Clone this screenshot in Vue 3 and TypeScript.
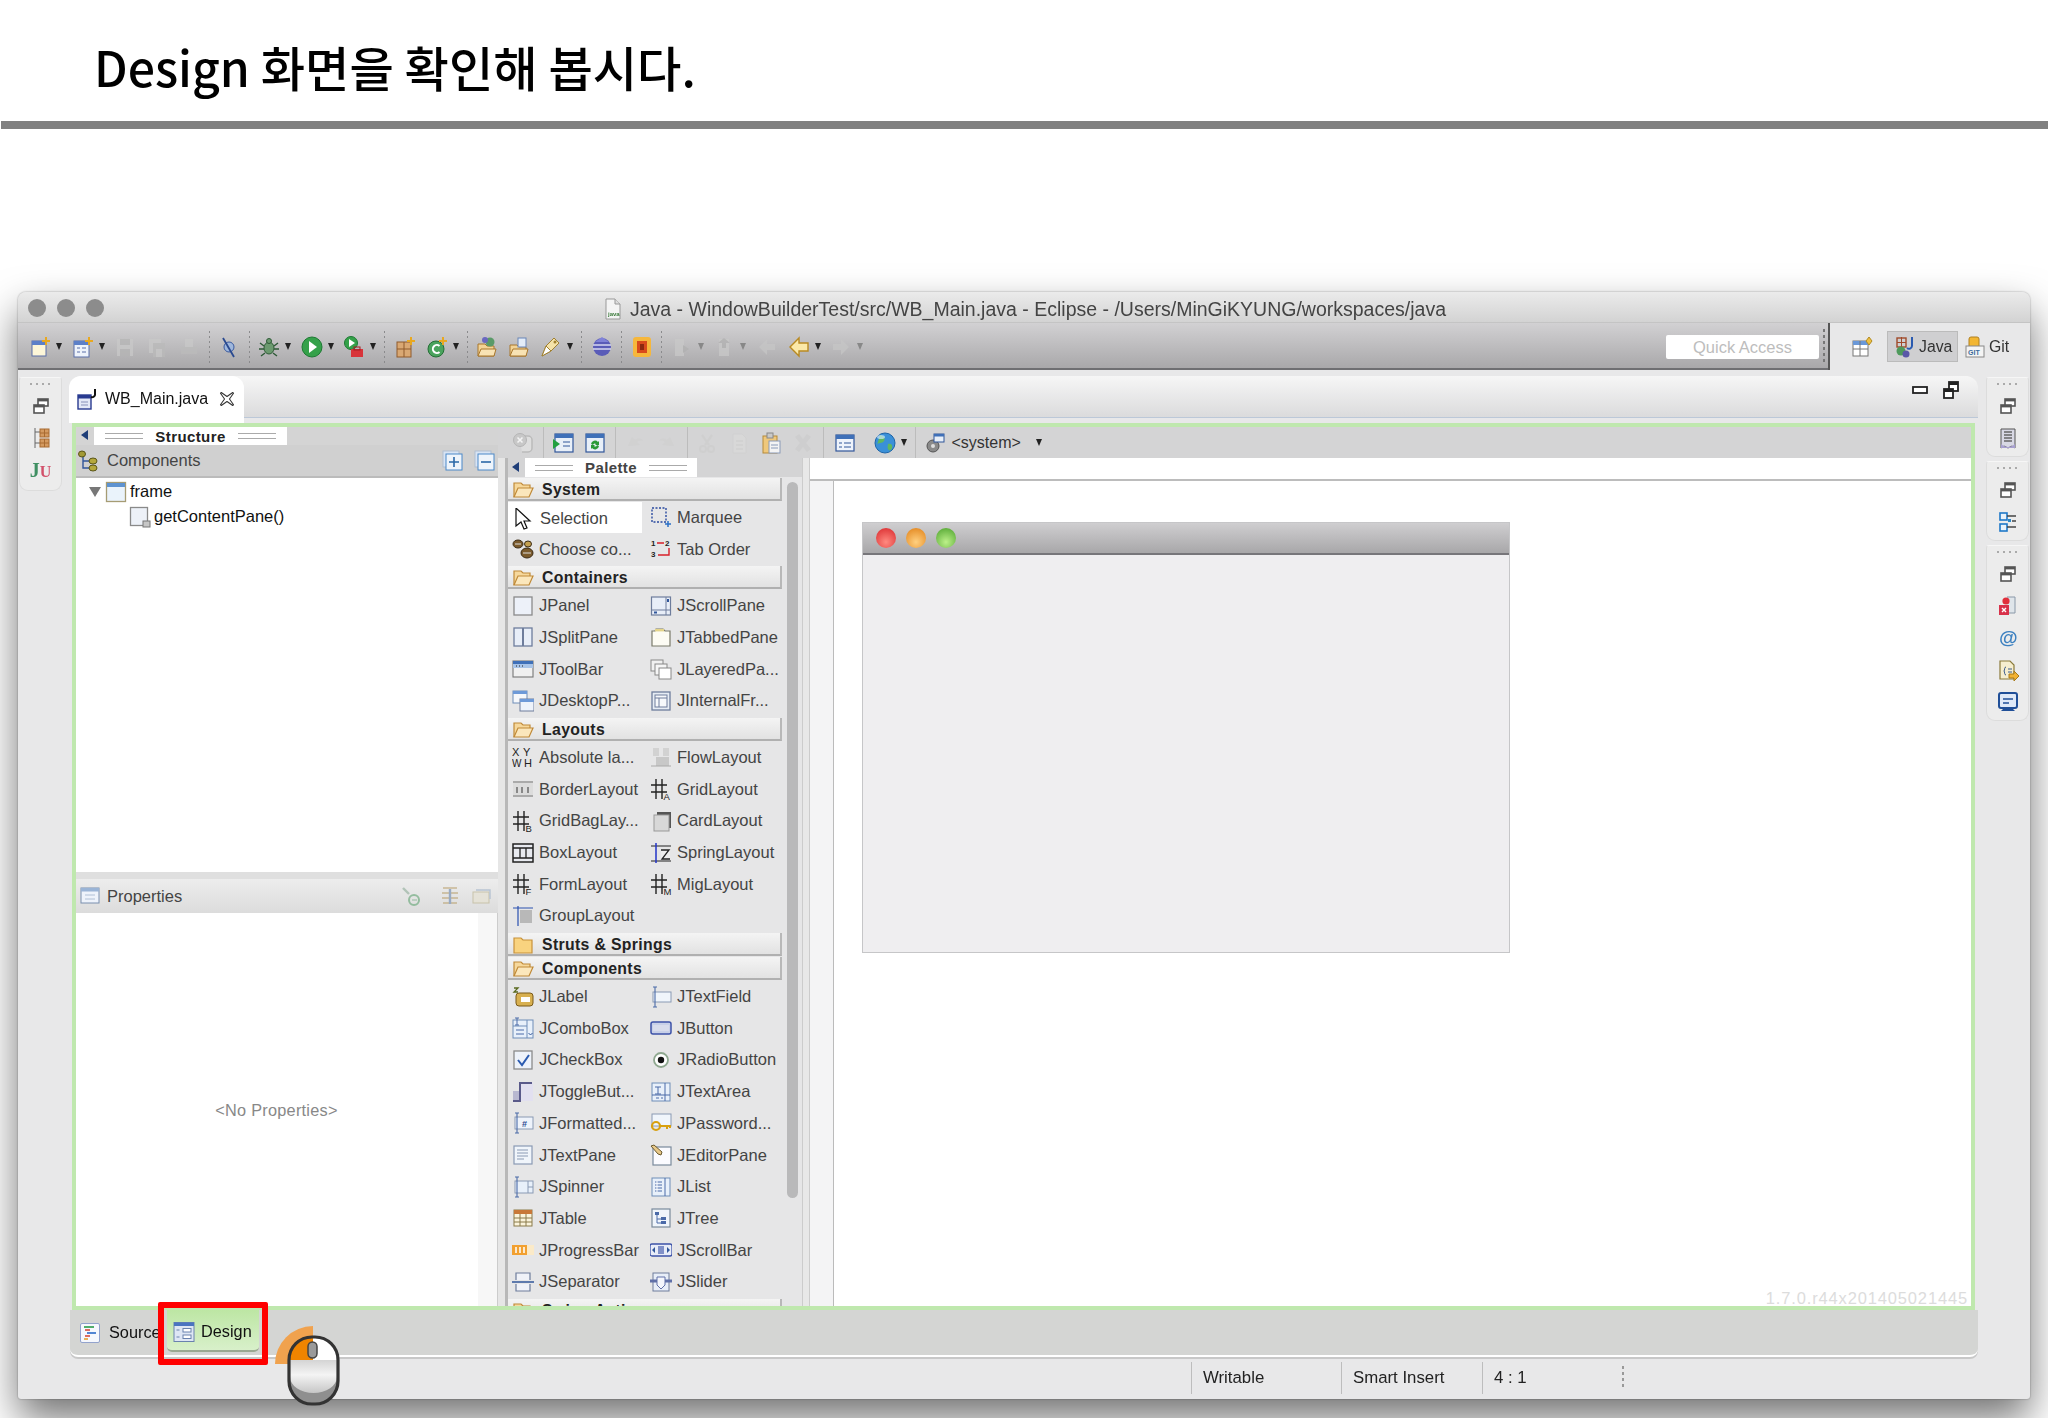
<template>
  <div class="page">
    <header class="slide-head">
      <h1>Design 화면을 확인해 봅시다.</h1>
    </header>
    <div class="slide-rule"></div>

    <div class="window">
      <!-- title bar -->
      <div class="titlebar">
        <div class="lights"><i></i><i></i><i></i></div>
        <div class="title">
          <svg class="ico" viewBox="0 0 22 22" v-html="icons.javaFile"></svg>
          <span>Java - WindowBuilderTest/src/WB_Main.java - Eclipse - /Users/MinGiKYUNG/workspaces/java</span>
        </div>
      </div>

      <!-- main toolbar -->
      <div class="toolrow">
        <div class="tools">
          <template v-for="(t, i) in mainTools" :key="i">
            <span v-if="t.sep" class="sep"></span>
            <span v-else class="tool" :class="{ 'has-arrow': t.arrow, off: t.off }">
              <svg class="ico" viewBox="0 0 22 22" v-html="icons[t.icon!]"></svg>
              <b v-if="t.arrow" class="caret"></b>
            </span>
          </template>
          <div class="quick">Quick Access</div>
          <span class="grip"></span>
        </div>
        <div class="perspectives">
          <svg class="ico" viewBox="0 0 22 22" v-html="icons.openPersp"></svg>
          <div class="persp active">
            <svg class="ico" viewBox="0 0 22 22" v-html="icons.javaPersp"></svg>
            <span>Java</span>
          </div>
          <div class="persp">
            <svg class="ico" viewBox="0 0 22 22" v-html="icons.git"></svg>
            <span>Git</span>
          </div>
        </div>
      </div>

      <div class="workbench">
        <!-- left trim -->
        <aside class="trim trim-left">
          <div class="trim-card">
            <span class="dots"></span>
            <svg class="ico" viewBox="0 0 22 22" v-html="icons.restore"></svg>
            <svg class="ico" viewBox="0 0 22 22" v-html="icons.hierarchy"></svg>
            <span class="junit">J<em>U</em></span>
          </div>
        </aside>

        <!-- editor -->
        <section class="editor">
          <div class="tabbar">
            <div class="file-tab">
              <svg class="ico" viewBox="0 0 22 22" v-html="icons.classFile"></svg>
              <span>WB_Main.java</span>
              <svg class="ico close" viewBox="0 0 22 22" v-html="icons.close"></svg>
            </div>
            <div class="view-btns">
              <svg class="ico" viewBox="0 0 22 22" v-html="icons.minimize"></svg>
              <svg class="ico" viewBox="0 0 22 22" v-html="icons.maximize"></svg>
            </div>
          </div>

          <div class="green-frame">
            <!-- structure -->
            <div class="structure">
              <div class="pane-head">
                <b class="back"></b>
                <div class="head-tab"><u></u><strong>Structure</strong><u></u></div>
              </div>
              <div class="comp-bar">
                <svg class="ico" viewBox="0 0 22 22" v-html="icons.components"></svg>
                <span>Components</span>
                <svg class="ico push" viewBox="0 0 22 22" v-html="icons.expand"></svg>
                <svg class="ico" viewBox="0 0 22 22" v-html="icons.collapse"></svg>
              </div>
              <div class="tree">
                <div class="node">
                  <b class="twist"></b>
                  <svg class="ico" viewBox="0 0 22 22" v-html="icons.frame"></svg>
                  <span>frame</span>
                </div>
                <div class="node child">
                  <svg class="ico" viewBox="0 0 22 22" v-html="icons.pane"></svg>
                  <span>getContentPane()</span>
                </div>
              </div>
              <div class="hsash"></div>
              <div class="prop-bar">
                <svg class="ico" viewBox="0 0 22 22" v-html="icons.propsIcon"></svg>
                <span>Properties</span>
                <svg class="ico push off" viewBox="0 0 22 22" v-html="icons.propA"></svg>
                <svg class="ico off" viewBox="0 0 22 22" v-html="icons.propB"></svg>
                <svg class="ico off" viewBox="0 0 22 22" v-html="icons.propC"></svg>
              </div>
              <div class="props">&lt;No Properties&gt;</div>
            </div>

            <!-- designer -->
            <div class="designer">
              <div class="design-tools">
                <template v-for="(t, i) in designTools" :key="i">
                  <span v-if="t.sep" class="sep plain"></span>
                  <span v-else class="tool" :class="[{ 'has-arrow': t.arrow, off: t.off }, t.cls]">
                    <svg class="ico" viewBox="0 0 22 22" v-html="icons[t.icon!]"></svg>
                    <b v-if="t.arrow" class="caret"></b>
                  </span>
                </template>
                <span class="sep plain"></span>
                <svg class="ico sys" viewBox="0 0 22 22" v-html="icons.system"></svg>
                <span class="laf">&lt;system&gt;</span>
                <b class="caret"></b>
              </div>

              <div class="design-body">
                <div class="palette">
                  <div class="palette-head">
                    <b class="back"></b>
                    <div class="head-tab"><u></u><strong>Palette</strong><u></u></div>
                  </div>
                  <div class="palette-list">
                    <span class="scroll"></span>
                    <template v-for="g in palette" :key="g.name">
                      <div class="cat">
                        <svg class="ico" viewBox="0 0 22 22" v-html="g.closed ? icons.folder : icons.folderOpen"></svg>
                        <span>{{ g.name }}</span>
                      </div>
                      <div v-if="g.items.length" class="items">
                        <div
                          v-for="it in g.items"
                          :key="it[0]"
                          class="item"
                          :class="{ selected: it[0] === 'Selection' }"
                        >
                          <svg class="ico" viewBox="0 0 22 22" v-html="icons[it[1]]"></svg>
                          <span>{{ it[0] }}</span>
                        </div>
                      </div>
                    </template>
                  </div>
                </div>

                <div class="vsash"></div>

                <div class="canvas">
                  <div class="ruler-top"></div>
                  <div class="canvas-row">
                    <div class="ruler-left"></div>
                    <div class="stage">
                      <div class="mock">
                        <div class="mock-title"><i></i><i></i><i></i></div>
                      </div>
                      <span class="version">1.7.0.r44x201405021445</span>
                    </div>
                  </div>
                </div>
              </div>
            </div>
          </div>

          <div class="bottom-tabs">
            <div class="btab">
              <svg class="ico" viewBox="0 0 22 22" v-html="icons.source"></svg>
              <span>Source</span>
            </div>
            <div class="btab active">
              <svg class="ico" viewBox="0 0 22 22" v-html="icons.design"></svg>
              <span>Design</span>
            </div>
          </div>
        </section>

        <!-- right trim -->
        <aside class="trim trim-right">
          <div class="trim-card" v-for="(card, i) in rightTrim" :key="i">
            <span class="dots"></span>
            <svg v-for="n in card" :key="n" class="ico" viewBox="0 0 22 22" v-html="icons[n]"></svg>
          </div>
        </aside>
      </div>

      <!-- status bar -->
      <div class="status">
        <span class="seg w1">Writable</span>
        <span class="seg w2">Smart Insert</span>
        <span class="seg w3">4 : 1</span>
        <span class="status-grip"></span>
      </div>
    </div>

    <!-- callouts on top of the screenshot -->
    <div class="red-box"></div>
    <svg class="mouse" viewBox="0 0 72 84" width="72" height="84">
      <defs>
        <linearGradient id="mouseBody" x1="0" y1="0" x2="0" y2="1">
          <stop offset="0" stop-color="#d4d4d4" />
          <stop offset="0.45" stop-color="#f4f4f4" />
          <stop offset="1" stop-color="#c6c6c6" />
        </linearGradient>
      </defs>
      <path d="M41 41V3A38 38 0 0 0 3 41z" fill="#f0a24e" />
      <rect x="17" y="14" width="49" height="67" rx="23" fill="#8f8f8f" />
      <path d="M41 14h2a23 23 0 0 1 23 23h-25z" fill="#fff" />
      <path d="M41 14h-2a22 22 0 0 0-22 23h24z" fill="#f08400" />
      <path d="M18 37h47v17a23.5 16 0 0 1-47 0z" fill="url(#mouseBody)" />
      <rect x="36" y="19" width="9" height="16" rx="4.5" fill="#9a9a9a" stroke="#444" stroke-width="1.5" />
      <rect x="17" y="14" width="49" height="67" rx="23" fill="none" stroke="#333" stroke-width="3.2" />
    </svg>
  </div>
</template>

<script setup lang="ts">
interface Tool {
  icon?: string
  arrow?: boolean
  off?: boolean
  sep?: boolean
  cls?: string
}

interface PaletteGroup {
  name: string
  closed?: boolean
  items: [string, string][]
}

const grid = (label: string) =>
  `<path d="M1 7h16M1 14h16M6 1v20M12 1v20" stroke="#222" stroke-width="1.4" fill="none"/><text x="13.5" y="21.5" font-size="9.5" font-family="Liberation Sans" fill="#222">${label}</text>`

const icons: Record<string, string> = {
  javaFile:
    '<path d="M4 1h9l5 5v15H4z" fill="#f4f4f4" stroke="#999"/><path d="M13 1v5h5" fill="#ddd" stroke="#999"/><text x="6" y="18" font-size="6" font-family="Liberation Sans" font-weight="700" fill="#3a7a3a">java</text>',
  newWin:
    '<rect x="3" y="5" width="14" height="15" fill="#fdf6d8" stroke="#5a6fa8"/><rect x="3" y="5" width="14" height="4" fill="#5d80c8"/><path d="M17 1v8M13 5h8" stroke="#e8a820" stroke-width="2"/>',
  newClass:
    '<rect x="2" y="5" width="15" height="16" fill="#eef3fb" stroke="#5a6fa8"/><rect x="2" y="5" width="15" height="4" fill="#5d80c8"/><path d="M5 12h3M10 12h4M5 16h3M10 16h4" stroke="#5a6fa8"/><path d="M17 1v8M13 5h8" stroke="#e8a820" stroke-width="2"/>',
  save: '<path d="M3 3h16v17H3z" fill="#c9c9c9"/><path d="M6 3h10v6H6zM6 13h10v7H6z" fill="#b5b5b5"/>',
  saveAll:
    '<path d="M3 3h12v14H3z" fill="#c9c9c9"/><path d="M7 7h12v14H7z" fill="#bababa"/><path d="M10 13h6v8h-6z" fill="#c9c9c9"/>',
  print:
    '<path d="M7 3h8v8H7z" fill="#c9c9c9"/><path d="M3 11h16v7H3z" fill="#bbb"/>',
  skip:
    '<circle cx="11" cy="11" r="5" fill="#9fb7dc" stroke="#3a5aa0"/><path d="M5 2l11 19" stroke="#2a4a90" stroke-width="1.8"/>',
  debug:
    '<ellipse cx="11" cy="12" rx="5" ry="6" fill="#6b9a6f" stroke="#2d5a36"/><circle cx="11" cy="5" r="2.5" fill="#6b9a6f" stroke="#2d5a36"/><path d="M2 7l4 3M20 7l-4 3M1 13h5M21 13h-5M3 20l4-3M19 20l-4-3" stroke="#2d5a36" stroke-width="1.4"/>',
  run: '<circle cx="11" cy="11" r="10" fill="#35a14a" stroke="#1d7a33"/><path d="M8 5l8 6-8 6z" fill="#fff"/>',
  extTools:
    '<circle cx="8" cy="7" r="6.5" fill="#35a14a" stroke="#1d7a33"/><path d="M6 3l6 4-6 4z" fill="#fff"/><rect x="8" y="13" width="12" height="8" fill="#d8343a"/><rect x="11" y="11" width="6" height="3" fill="none" stroke="#a51c22"/>',
  newPkg:
    '<rect x="3" y="6" width="14" height="15" fill="#d9a873" stroke="#8f5b2c"/><path d="M10 6v15M3 13h14" stroke="#8f5b2c"/><path d="M17 1v8M13 5h8" stroke="#e8a820" stroke-width="2"/>',
  newType:
    '<circle cx="10" cy="13" r="8" fill="#4aa35d" stroke="#246f36"/><path d="M13.5 10a4 4 0 1 0 0 6" fill="none" stroke="#fff" stroke-width="2"/><path d="M17 1v8M13 5h8" stroke="#e8a820" stroke-width="2"/>',
  openType:
    '<path d="M2 20V8h7l2 2h7v10z" fill="#f2d395" stroke="#a8762c"/><path d="M2 20l3-7h15l-2 7z" fill="#f8e3b4" stroke="#a8762c"/><circle cx="14" cy="6" r="4.5" fill="#5a9a68"/><circle cx="9" cy="4" r="3" fill="#6a68c0"/>',
  openRes:
    '<path d="M2 20V9h7l2 2h7v9z" fill="#f2d395" stroke="#a8762c"/><path d="M2 20l3-7h15l-2 7z" fill="#f8e3b4" stroke="#a8762c"/><rect x="10" y="2" width="8" height="9" fill="#e3ecf8" stroke="#6a86b8"/>',
  search:
    '<path d="M2 20l4-10 8-8 5 5-8 8z" fill="#f5e2a8" stroke="#a08030"/><path d="M2 20l4-10 5 5z" fill="#fff" stroke="#a08030"/><circle cx="15" cy="6" r="1.5" fill="#a08030"/>',
  ball: '<circle cx="11" cy="11" r="9" fill="#5a5cb8"/><path d="M2 9h18M2 13h18" stroke="#d8d8f0" stroke-width="1.4"/><path d="M4 6l7-5 7 5" fill="#8082d8"/>',
  stop: '<rect x="2" y="1" width="18" height="20" rx="3" fill="#f6b73c"/><rect x="6" y="5" width="10" height="12" fill="#d84a1c"/><rect x="9" y="8" width="4" height="6" fill="#8c2a10"/>',
  nextAnn:
    '<path d="M4 3h9v17H4z" fill="#c8c8c8"/><path d="M12 9l6 4-6 4z" fill="#b0b0b0"/>',
  prevAnn:
    '<path d="M6 3h10v17H6z" fill="#c8c8c8"/><path d="M11 2l6 5h-4v5h-4V7H5z" fill="#b0b0b0"/>',
  backOff: '<path d="M3 11l8-8v5h8v6h-8v5z" fill="#c6c6c6"/>',
  back: '<path d="M2 11l9-9v5h9v8h-9v5z" fill="#fbe9a8" stroke="#b98a22" stroke-width="1.4"/>',
  fwdOff: '<path d="M19 11l-8-8v5H3v6h8v5z" fill="#c6c6c6"/>',
  openPersp:
    '<rect x="2" y="5" width="15" height="15" fill="#fff" stroke="#777"/><rect x="2" y="5" width="15" height="4" fill="#6a98d8"/><path d="M9 5v15M2 13h15" stroke="#777"/><path d="M18 1l3 4-3 4-3-4z" fill="#f0c040" stroke="#b08a20"/>',
  javaPersp:
    '<rect x="3" y="2" width="9" height="9" fill="none" stroke="#a04a2a" stroke-width="1.4"/><path d="M7.5 1v11M3 6.5h9" stroke="#a04a2a"/><circle cx="7" cy="15" r="4.5" fill="#4e9a5c"/><circle cx="12" cy="18" r="3.5" fill="#5a58a8"/><path d="M18 1v9a3 3 0 0 1-5 2" fill="none" stroke="#2a5ab0" stroke-width="2"/>',
  git: '<rect x="5" y="1" width="10" height="11" rx="2" fill="#f2b632" stroke="#b08020"/><rect x="2" y="10" width="18" height="11" fill="#f4f4f4" stroke="#888"/><text x="4" y="19" font-size="7" font-weight="700" font-family="Liberation Sans" fill="#3a6a9a">GIT</text>',
  restore:
    '<rect x="8" y="4" width="10" height="7" fill="#fff" stroke="#555" stroke-width="1.6"/><rect x="8" y="4" width="10" height="2.4" fill="#555"/><rect x="4" y="10" width="10" height="8" fill="#fff" stroke="#555" stroke-width="1.6"/><rect x="4" y="10" width="10" height="2.4" fill="#555"/>',
  hierarchy:
    '<path d="M5 1v20M5 5h5M5 16h5" stroke="#666" fill="none"/><rect x="10" y="2" width="9" height="8" fill="#d49a60" stroke="#a86a30"/><rect x="10" y="12" width="9" height="8" fill="#d49a60" stroke="#a86a30"/><path d="M14.5 2v8M10 6h9M14.5 12v8M10 16h9" stroke="#a86a30"/>',
  classFile:
    '<rect x="1" y="7" width="13" height="14" fill="#e4e8f6" stroke="#283a90" stroke-width="1.4"/><rect x="1" y="7" width="13" height="3.5" fill="#283a90"/><path d="M4 14h7M4 17h7" stroke="#8890b8"/><path d="M18 1v6a3 3 0 0 1-4 2" fill="none" stroke="#111" stroke-width="2"/>',
  close:
    '<path d="M4 3l7 5 7-5 1 1-5 7 5 7-1 1-7-5-7 5-1-1 5-7-5-7z" fill="#fff" stroke="#333" stroke-width="1.3" stroke-linejoin="round"/>',
  minimize: '<rect x="3" y="8" width="14" height="6" fill="#fff" stroke="#222" stroke-width="1.8"/>',
  maximize:
    '<rect x="9" y="3" width="9" height="9" fill="#fff" stroke="#222" stroke-width="1.8"/><rect x="9" y="3" width="9" height="3" fill="#222"/><rect x="4" y="10" width="9" height="9" fill="#fff" stroke="#222" stroke-width="1.8"/><rect x="4" y="10" width="9" height="3" fill="#222"/>',
  components:
    '<path d="M5 5v13h7M5 11h7" fill="none" stroke="#31569a" stroke-width="1.4"/><ellipse cx="4" cy="4" rx="3.5" ry="3" fill="#a39a36" stroke="#5a5618"/><ellipse cx="15" cy="11" rx="4" ry="3" fill="#b5a83c" stroke="#5a5618"/><ellipse cx="15" cy="18" rx="4" ry="3" fill="#b5a83c" stroke="#5a5618"/>',
  expand:
    '<rect x="1" y="1" width="16" height="16" fill="#d8e4f4" stroke="#b0bed0"/><rect x="4" y="4" width="16" height="16" fill="#eef4fb" stroke="#4a88c8"/><path d="M12 7v10M7 12h10" stroke="#2a68a8" stroke-width="1.6"/>',
  collapse:
    '<rect x="1" y="1" width="16" height="16" fill="#d8e4f4" stroke="#b0bed0"/><rect x="4" y="4" width="16" height="16" fill="#eef4fb" stroke="#4a88c8"/><path d="M7 12h10" stroke="#2a68a8" stroke-width="1.6"/>',
  frame:
    '<rect x="1.5" y="1.5" width="19" height="19" fill="#eaf3fb" stroke="#a69c74" stroke-width="1.3"/><rect x="2" y="2" width="18" height="4" fill="#5f93d0"/>',
  pane: '<rect x="1.5" y="1.5" width="17" height="18" fill="#edf1f8" stroke="#8a8a8a" stroke-width="1.3"/><rect x="14" y="15" width="7" height="6" fill="#c6c6c6" stroke="#777"/>',
  propsIcon:
    '<rect x="2" y="3" width="18" height="15" fill="#eef3fb" stroke="#7a8fae"/><rect x="2" y="3" width="18" height="3.5" fill="#9ab4d6"/><path d="M6 10h10M6 14h10" stroke="#b0c0d6"/>',
  propA:
    '<circle cx="14" cy="15" r="5" fill="none" stroke="#7ab088" stroke-width="2"/><path d="M3 3l6 6" stroke="#a0b8a8" stroke-width="2.4"/><path d="M12 15h5" stroke="#7ab088"/>',
  propB:
    '<path d="M4 3h14M3 8h16M3 13h16M4 18h14" stroke="#bda678" stroke-width="1.6"/><path d="M11 4v15" stroke="#8098b8" stroke-width="2.4"/>',
  propC:
    '<rect x="3" y="7" width="16" height="11" fill="#e6e2d4" stroke="#c0b898"/><path d="M6 5h14v9" fill="none" stroke="#a8b8cc" stroke-width="1.4"/>',
  refreshX:
    '<path d="M7 4h9a4 4 0 0 1 4 4v8a4 4 0 0 1-4 4h-6" fill="#e2e2e2" stroke="#b2b2b2" stroke-width="1.5"/><circle cx="8" cy="8" r="6.5" fill="#c4c4c4" stroke="#aaa"/><path d="M5.5 5.5l5 5M10.5 5.5l-5 5" stroke="#fff" stroke-width="1.6"/>',
  testForm:
    '<rect x="3" y="2" width="18" height="18" fill="#e8eff8" stroke="#31569a" stroke-width="1.2"/><rect x="3" y="2" width="18" height="4" fill="#3f70b8"/><path d="M11 10h7M11 14h7" stroke="#31569a"/><path d="M1 7l7 5-7 5z" fill="#22a040"/>',
  refreshForm:
    '<rect x="2" y="2" width="18" height="18" fill="#e8eff8" stroke="#31569a" stroke-width="1.2"/><rect x="2" y="2" width="18" height="4" fill="#3f70b8"/><path d="M7 12a4 4 0 0 1 7-2l1-1v4h-4l1-1a2 2 0 0 0-3 1zM15 14a4 4 0 0 1-7 2l-1 1v-4h4l-1 1a2 2 0 0 0 3-1z" fill="#2a9a38"/>',
  undo: '<path d="M4 14l4-9 3 3c3-2 6-2 8 1-3-1-5 0-6 1l3 3z" fill="#d0d0d0"/>',
  redo: '<path d="M18 14l-4-9-3 3c-3-2-6-2-8 1 3-1 5 0 6 1l-3 3z" fill="#d0d0d0"/>',
  cut: '<path d="M6 3l7 10M16 3l-7 10" stroke="#cecece" stroke-width="2.2"/><circle cx="7" cy="17" r="3" fill="none" stroke="#cecece" stroke-width="2"/><circle cx="15" cy="17" r="3" fill="none" stroke="#cecece" stroke-width="2"/>',
  copy: '<path d="M5 2h9l4 4v15H5z" fill="#dadada" stroke="#d0d0d0"/><path d="M8 9h7M8 13h7M8 17h7" stroke="#cacaca"/>',
  paste:
    '<rect x="3" y="4" width="14" height="17" fill="#efc87c" stroke="#b58a3a"/><rect x="7" y="1" width="6" height="5" fill="#c9c9c9" stroke="#888"/><rect x="9" y="9" width="11" height="12" fill="#f4f4f4" stroke="#8a9ab8"/><path d="M11 13h7M11 16h7" stroke="#8a9ab8"/>',
  del: '<path d="M3 5l4-3 4 5 4-5 4 3-5 6 5 6-4 3-4-5-4 5-4-3 5-6z" fill="#cdcdcd"/>',
  preview:
    '<rect x="2" y="3" width="18" height="16" fill="#eef3fb" stroke="#31569a" stroke-width="1.2"/><rect x="2" y="3" width="18" height="4" fill="#3f70b8"/><path d="M5 11h3M10 11h7M5 15h3M10 15h7" stroke="#31569a"/>',
  globe:
    '<circle cx="11" cy="11" r="10" fill="#3a90d8" stroke="#1d64a8"/><path d="M6 3c3 1 6 3 4 6s-6 1-7 4M14 12c3-1 5 1 4 4s-3 3-4 1 0-3 0-5z" fill="#5fb860"/><ellipse cx="7" cy="5" rx="4" ry="2" fill="#cfe8fa" opacity=".7"/>',
  system:
    '<circle cx="9" cy="14" r="6" fill="#8a8a8a" stroke="#555"/><circle cx="9" cy="14" r="2" fill="#ddd"/><rect x="10" y="2" width="10" height="8" fill="#e8eff8" stroke="#31569a"/><rect x="10" y="2" width="10" height="2.5" fill="#3f70b8"/>',
  tasks:
    '<path d="M4 2h14v19l-3-2-4 2-4-2-3 2z" fill="#d8d8e4" stroke="#555"/><path d="M7 5h8M7 8h8M7 11h8M7 14h8" stroke="#666" stroke-width="1.3"/><path d="M4 17c4 4 10 4 14 0v4H4z" fill="#a8a0d0"/>',
  outline:
    '<rect x="3" y="2" width="7" height="7" fill="#e8f2fb" stroke="#1f78c8" stroke-width="1.6"/><rect x="3" y="13" width="7" height="7" fill="#e8f2fb" stroke="#1f78c8" stroke-width="1.6"/><rect x="11" y="8" width="3" height="3" fill="#2a88c8"/><path d="M10 5h9M15 10h4M10 16h9" stroke="#444" stroke-width="1.3"/>',
  problems:
    '<path d="M10 2h8v16H9" fill="#dfe5ea" stroke="#8a98a8"/><circle cx="9" cy="6" r="3.6" fill="#e0303c"/><rect x="2" y="10" width="10" height="10" fill="#d8324a"/><path d="M5 13l4 4M9 13l-4 4" stroke="#fff" stroke-width="1.4"/>',
  at: '<text x="11" y="17" font-size="19" text-anchor="middle" font-style="italic" font-family="Liberation Sans" font-weight="700" fill="#3c80c0">@</text>',
  decl: '<path d="M3 2h10l4 4v14H3z" fill="#f6eecf" stroke="#8a7a3a" stroke-width="1.2"/><path d="M9 8c-2 0-1 3-2 4 1 1 0 4 2 4M11 10h4M11 13h4" stroke="#3a5a8a" fill="none"/><path d="M12 15h5v-3l5 5-5 5v-3h-5z" fill="#f2b233" stroke="#a87a18"/>',
  console:
    '<rect x="2" y="2" width="18" height="15" rx="2" fill="#dfe9f8" stroke="#204f98" stroke-width="2"/><path d="M6 8h10M6 12h6" stroke="#204f98" stroke-width="1.5"/><path d="M4 20h14l-3-3H7z" fill="#204f98"/>',
  folder:
    '<path d="M2 19V4h7l2 2h9v13z" fill="#f9d37f" stroke="#c8923a" stroke-width="1.2"/>',
  folderOpen:
    '<path d="M2 18V4h7l2 2h7v3" fill="#f6d89c" stroke="#c08a38" stroke-width="1.2"/><path d="M2 18l4-9h15l-4 9z" fill="#fbe7bc" stroke="#c08a38" stroke-width="1.2"/>',
  cursor:
    '<path d="M4 0v18l5-4 3 7 3-1-3-7h6z" fill="#fff" stroke="#111" stroke-width="1.2"/>',
  marquee:
    '<rect x="2" y="2" width="14" height="14" fill="none" stroke="#2a4aa0" stroke-width="1.4" stroke-dasharray="2 1.5"/><path d="M18 15v6M15 18h6" stroke="#2a70c8" stroke-width="1.5"/>',
  beans:
    '<ellipse cx="6" cy="6" rx="5" ry="4" fill="#7a5a2c" stroke="#3a2a14"/><ellipse cx="16" cy="6" rx="3.5" ry="3" fill="#c4a050" stroke="#3a2a14"/><ellipse cx="15" cy="15" rx="6" ry="5" fill="#7a5a2c" stroke="#3a2a14"/><path d="M3 6h6M11 15h8" stroke="#ddd"/>',
  tabOrder:
    '<text x="1" y="8" font-size="8" font-weight="700" font-family="Liberation Sans" fill="#222">1</text><text x="15" y="8" font-size="8" font-weight="700" font-family="Liberation Sans" fill="#222">2</text><text x="1" y="19" font-size="8" font-weight="700" font-family="Liberation Sans" fill="#222">3</text><path d="M7 5h7M19 10v7h-11" fill="none" stroke="#d8202a" stroke-width="1.4"/>',
  jpanel: '<rect x="2" y="2" width="18" height="18" fill="#edf1f9" stroke="#8a8a8a" stroke-width="1.3"/>',
  jscroll:
    '<rect x="1.5" y="2" width="19" height="18" fill="#e8eef8" stroke="#6e7d9c" stroke-width="1.2"/><path d="M16 2v18M1.5 15h19" stroke="#6e7d9c"/><rect x="17" y="4" width="2" height="3" fill="#31569a"/><rect x="4" y="16.5" width="3" height="2" fill="#31569a"/>',
  jsplit:
    '<rect x="2" y="2" width="18" height="18" fill="#e8eef8" stroke="#6e7d9c" stroke-width="1.3"/><path d="M11 2v18" stroke="#6e7d9c" stroke-width="2"/>',
  jtabbed:
    '<path d="M2 5h3l1-2h7l2 2h5v15H2z" fill="#fdfcf4" stroke="#7a7a6a" stroke-width="1.2"/><rect x="5" y="3" width="9" height="2.4" fill="#e4d48a"/>',
  jtoolbar:
    '<rect x="1" y="3" width="20" height="16" fill="#f0f0f0" stroke="#777" stroke-width="1.1"/><rect x="1" y="3" width="20" height="3" fill="#3f70b8"/><rect x="1" y="6" width="20" height="4" fill="#a8c4e8"/><path d="M4 8h1M7 8h1M10 8h1" stroke="#222"/>',
  jlayered:
    '<rect x="1" y="2" width="12" height="11" fill="#f0f0f0" stroke="#888"/><rect x="5" y="6" width="12" height="11" fill="#f6f6f6" stroke="#888"/><rect x="9" y="10" width="12" height="11" fill="#fff" stroke="#888"/>',
  jdesktop:
    '<rect x="1" y="1" width="14" height="12" fill="#f6f8fb" stroke="#6e8db8"/><rect x="1" y="1" width="14" height="3" fill="#6e9ad8"/><rect x="8" y="9" width="14" height="12" fill="#eef3fb" stroke="#6e7d9c"/><rect x="8" y="9" width="14" height="3" fill="#6e9ad8"/>',
  jinternal:
    '<rect x="2" y="2" width="18" height="18" fill="#e6ecf4" stroke="#6e7d9c" stroke-width="1.3"/><rect x="5" y="5" width="12" height="12" fill="#f6f8fb" stroke="#6e7d9c"/><path d="M5 8h12M9 8v9" stroke="#6e7d9c"/>',
  absolute:
    '<text x="0" y="10" font-size="11" font-family="Liberation Sans" fill="#222">X</text><text x="11" y="10" font-size="11" font-family="Liberation Sans" fill="#222">Y</text><text x="0" y="21" font-size="10" font-family="Liberation Sans" fill="#222">W</text><text x="12" y="21" font-size="11" font-family="Liberation Sans" fill="#222">H</text>',
  flow: '<rect x="3" y="2" width="6" height="8" fill="#d2d2d2"/><rect x="13" y="2" width="6" height="8" fill="#d2d2d2"/><rect x="6" y="11" width="13" height="9" fill="#c8c8c8"/><path d="M1 20h20" stroke="#aaa"/>',
  border:
    '<rect x="1" y="3" width="20" height="16" fill="#dcdcdc"/><path d="M1 4h20M1 18h20" stroke="#999" stroke-width="1.4"/><path d="M5 9v6M10 9v6M16 9v6" stroke="#888" stroke-width="2"/>',
  gridA: grid('A'),
  gridB: grid('B'),
  card: '<rect x="7" y="2" width="14" height="16" fill="#555"/><rect x="4" y="5" width="15" height="16" fill="#d8d8d8" stroke="#999"/>',
  box: '<rect x="1" y="2" width="20" height="18" fill="#e8eaf0" stroke="#222" stroke-width="1.5"/><path d="M1 6h20M1 16h20M8 6v10M14 6v10" stroke="#222" stroke-width="1.3"/>',
  spring:
    '<path d="M1 4h20M1 19h20" stroke="#222"/><path d="M6 1v20" stroke="#2233c8" stroke-width="1.5"/><rect x="11" y="7" width="9" height="11" fill="#eee"/><path d="M11 8h8l-7 9h8" fill="none" stroke="#222" stroke-width="1.3"/>',
  gridF: grid('F'),
  gridM: grid('M'),
  group:
    '<path d="M1 3h20M6 1v20" stroke="#2a50b0" stroke-width="1.2"/><rect x="8" y="5" width="12" height="13" fill="#b8b8b8"/>',
  jlabel:
    '<rect x="4" y="7" width="17" height="13" rx="3" fill="#d8b050" stroke="#7a5a18"/><rect x="9" y="11" width="9" height="5" fill="#fff"/><path d="M2 2h4l-4 4h4" fill="none" stroke="#5a6a20" stroke-width="1.3"/>',
  jtextfield:
    '<rect x="3" y="6" width="18" height="10" fill="#f0f5fb" stroke="#8a9ab4"/><path d="M3 1h4M5 1v20M3 21h4" stroke="#4a6aa8" stroke-width="1.1"/>',
  jcombo:
    '<rect x="1" y="3" width="20" height="18" fill="#e8f0fa" stroke="#6e8db8"/><path d="M15 3v18M1 9h14" stroke="#6e8db8"/><path d="M5 1v7M3 1h4M3 8h4M4 13h8M4 17h8" stroke="#4a6aa8"/><path d="M16.5 16l2 2 2-2" stroke="#31569a" fill="none"/>',
  jbutton:
    '<rect x="1" y="5" width="20" height="12" rx="2" fill="#c8d0e8" stroke="#3c52a8" stroke-width="1.5"/><rect x="3" y="8" width="16" height="6" fill="#d8dcec"/>',
  jcheck:
    '<rect x="2" y="2" width="18" height="18" fill="#edf2fa" stroke="#8a8a8a" stroke-width="1.3"/><path d="M6 11l4 5 7-10" fill="none" stroke="#2a5ab0" stroke-width="2"/>',
  jradio:
    '<circle cx="11" cy="11" r="7" fill="#fff" stroke="#8fa890" stroke-width="1.8"/><circle cx="11" cy="11" r="3.2" fill="#111"/>',
  jtoggle:
    '<rect x="9" y="2" width="12" height="18" fill="#e2e0f0"/><rect x="1" y="10" width="8" height="10" fill="#b8b8d0"/><path d="M1 20h7V2h12" fill="none" stroke="#5a5a8a" stroke-width="2"/>',
  jtextarea:
    '<rect x="2" y="2" width="18" height="18" fill="#e8f0fa" stroke="#6e8db8"/><path d="M15 2v18M2 14h18M5 6h6M8 6v7M5 13h6" stroke="#4a6aa8"/><path d="M6 17h3M11 17h2" stroke="#4a6aa8"/>',
  jformatted:
    '<rect x="3" y="5" width="18" height="12" fill="#eef3fb" stroke="#8a9ab4"/><path d="M3 1h4M5 1v20M3 21h4" stroke="#4a6aa8" stroke-width="1.1"/><text x="10" y="15" font-size="9" font-weight="700" font-family="Liberation Sans" fill="#2a4a90">#</text>',
  jpassword:
    '<rect x="2" y="2" width="19" height="12" fill="#f0f5fb" stroke="#8a9ab4"/><circle cx="6" cy="14" r="4" fill="none" stroke="#d8a010" stroke-width="2.2"/><path d="M10 14h11M17 14v3M20 14v2" stroke="#d8a010" stroke-width="2"/>',
  jtextpane:
    '<rect x="2" y="2" width="18" height="18" fill="#f0f5fb" stroke="#8a9ab4" stroke-width="1.2"/><path d="M5 6h11M5 9h11M5 12h11M5 15h7" stroke="#8a9ab4"/>',
  jeditor:
    '<rect x="3" y="3" width="18" height="18" fill="#fbfbff" stroke="#7a8a9c" stroke-width="1.2"/><path d="M1 2l3-1 8 7-1 3-3-1z" fill="#e8c888" stroke="#6a5a30"/>',
  jspinner:
    '<rect x="3" y="5" width="18" height="12" fill="#e8f0fa" stroke="#8a9ab4"/><path d="M16 5v12M16 11h5" stroke="#8a9ab4"/><path d="M3 1h4M5 1v20M3 21h4" stroke="#4a6aa8" stroke-width="1.1"/>',
  jlist:
    '<rect x="2" y="2" width="18" height="18" fill="#e8f0fa" stroke="#6e8db8"/><path d="M15 2v18M5 6h7M5 9h7M5 12h7M5 15h7" stroke="#4a6aa8"/><path d="M7 5v11" stroke="#fff"/>',
  jtable:
    '<rect x="2" y="3" width="18" height="16" fill="#fbf4dc" stroke="#8a7a4a"/><rect x="2" y="3" width="18" height="4" fill="#c87838"/><path d="M2 11h18M2 15h18M8 7v12M14 7v12" stroke="#8a7a4a"/>',
  jtree:
    '<rect x="2" y="2" width="18" height="18" fill="#f0f5fb" stroke="#7a8a9c" stroke-width="1.2"/><rect x="5" y="5" width="4" height="3" fill="#4a6aa8"/><rect x="11" y="10" width="5" height="3" fill="#4a6aa8"/><rect x="11" y="14" width="5" height="3" fill="#4a6aa8"/><path d="M7 8v8h4M7 12h4" stroke="#4a6aa8" fill="none"/>',
  jprogress:
    '<rect x="0" y="6" width="22" height="10" fill="#fbeac8"/><rect x="0" y="6" width="15" height="10" fill="#f2a030"/><path d="M4 8v6M8 8v6M12 8v6" stroke="#fff" stroke-width="1.5"/>',
  jscrollbar:
    '<rect x="0" y="5" width="22" height="12" rx="2" fill="#e8ecf8" stroke="#3c52a8" stroke-width="1.3"/><path d="M5 8l-3 3 3 3zM17 8l3 3-3 3z" fill="#31569a"/><rect x="8" y="7" width="6" height="8" fill="#8090c8"/>',
  jseparator:
    '<path d="M4 9V2h14v7M4 13v7h14v-7" fill="#f0f2f8" stroke="#6e7d9c" stroke-width="1.2"/><path d="M0 11h22" stroke="#31569a" stroke-width="1.5"/>',
  jslider:
    '<rect x="3" y="2" width="16" height="18" fill="#e8eef8" stroke="#6e7d9c"/><path d="M0 10h22" stroke="#6070a8" stroke-width="3"/><path d="M7 6h8v8l-4 4-4-4z" fill="#f4f6fc" stroke="#6070a8"/>',
  source:
    '<rect x="1.5" y="1.5" width="19" height="19" rx="1.5" fill="#f6f8fd" stroke="#93a3cc"/><path d="M5 5h10" stroke="#2a9a48" stroke-width="1.6"/><path d="M6 8h5" stroke="#d84a3a" stroke-width="1.6"/><path d="M8 11h9" stroke="#2a6ac8" stroke-width="1.6"/><path d="M6 14h5" stroke="#d84a3a" stroke-width="1.6"/><path d="M5 17h4" stroke="#e8a030" stroke-width="1.6"/>',
  design:
    '<rect x="1" y="1.5" width="20" height="19" fill="#dee6f4" stroke="#6a82ae"/><rect x="1" y="1.5" width="20" height="3.5" fill="#4a74c0"/><rect x="10" y="7.5" width="8" height="3.5" fill="#fff" stroke="#6a82ae"/><rect x="10" y="14" width="8" height="3.5" fill="#fff" stroke="#6a82ae"/><path d="M3.5 9h3M3.5 16h3" stroke="#6a82ae"/>'
}

const mainTools: Tool[] = [
  { icon: 'newWin', arrow: true },
  { icon: 'newClass', arrow: true },
  { icon: 'save', off: true },
  { icon: 'saveAll', off: true },
  { icon: 'print', off: true },
  { sep: true },
  { icon: 'skip' },
  { sep: true },
  { icon: 'debug', arrow: true },
  { icon: 'run', arrow: true },
  { icon: 'extTools', arrow: true },
  { sep: true },
  { icon: 'newPkg' },
  { icon: 'newType', arrow: true },
  { sep: true },
  { icon: 'openType' },
  { icon: 'openRes' },
  { icon: 'search', arrow: true },
  { sep: true },
  { icon: 'ball' },
  { sep: true },
  { icon: 'stop' },
  { sep: true },
  { icon: 'nextAnn', arrow: true, off: true },
  { icon: 'prevAnn', arrow: true, off: true },
  { icon: 'backOff', off: true },
  { icon: 'back', arrow: true },
  { icon: 'fwdOff', arrow: true, off: true }
]

const designTools: Tool[] = [
  { icon: 'refreshX', off: true },
  { sep: true },
  { icon: 'testForm' },
  { icon: 'refreshForm' },
  { sep: true },
  { icon: 'undo', off: true },
  { icon: 'redo', off: true },
  { sep: true },
  { icon: 'cut', off: true },
  { icon: 'copy', off: true },
  { icon: 'paste' },
  { icon: 'del', off: true },
  { sep: true },
  { icon: 'preview', cls: 'ml2' },
  { icon: 'globe', arrow: true, cls: 'ml8' }
]

const palette: PaletteGroup[] = [
  {
    name: 'System',
    items: [
      ['Selection', 'cursor'],
      ['Marquee', 'marquee'],
      ['Choose co...', 'beans'],
      ['Tab Order', 'tabOrder']
    ]
  },
  {
    name: 'Containers',
    items: [
      ['JPanel', 'jpanel'],
      ['JScrollPane', 'jscroll'],
      ['JSplitPane', 'jsplit'],
      ['JTabbedPane', 'jtabbed'],
      ['JToolBar', 'jtoolbar'],
      ['JLayeredPa...', 'jlayered'],
      ['JDesktopP...', 'jdesktop'],
      ['JInternalFr...', 'jinternal']
    ]
  },
  {
    name: 'Layouts',
    items: [
      ['Absolute la...', 'absolute'],
      ['FlowLayout', 'flow'],
      ['BorderLayout', 'border'],
      ['GridLayout', 'gridA'],
      ['GridBagLay...', 'gridB'],
      ['CardLayout', 'card'],
      ['BoxLayout', 'box'],
      ['SpringLayout', 'spring'],
      ['FormLayout', 'gridF'],
      ['MigLayout', 'gridM'],
      ['GroupLayout', 'group']
    ]
  },
  { name: 'Struts & Springs', closed: true, items: [] },
  {
    name: 'Components',
    items: [
      ['JLabel', 'jlabel'],
      ['JTextField', 'jtextfield'],
      ['JComboBox', 'jcombo'],
      ['JButton', 'jbutton'],
      ['JCheckBox', 'jcheck'],
      ['JRadioButton', 'jradio'],
      ['JToggleBut...', 'jtoggle'],
      ['JTextArea', 'jtextarea'],
      ['JFormatted...', 'jformatted'],
      ['JPassword...', 'jpassword'],
      ['JTextPane', 'jtextpane'],
      ['JEditorPane', 'jeditor'],
      ['JSpinner', 'jspinner'],
      ['JList', 'jlist'],
      ['JTable', 'jtable'],
      ['JTree', 'jtree'],
      ['JProgressBar', 'jprogress'],
      ['JScrollBar', 'jscrollbar'],
      ['JSeparator', 'jseparator'],
      ['JSlider', 'jslider']
    ]
  },
  { name: 'Swing Actions', items: [] }
]

const rightTrim = [
  ['restore', 'tasks'],
  ['restore', 'outline'],
  ['restore', 'problems', 'at', 'decl', 'console']
]
</script>

<style>
html,
body {
  margin: 0;
  background: #fff;
  overflow: hidden;
}
</style>

<style scoped>
.page {
  position: relative;
  width: 2048px;
  height: 1418px;
  overflow: hidden;
  background: #fff;
  font-family: "Liberation Sans", "Noto Sans CJK KR", sans-serif;
  color: #222;
}

.ico {
  display: block;
  width: 22px;
  height: 22px;
  flex: none;
}

/* slide heading */
.slide-head {
  height: 121px;
  padding-left: 94px;
  box-sizing: border-box;
}

.slide-head h1 {
  margin: 0;
  padding-top: 32px;
  font-family: "Noto Sans CJK KR", sans-serif;
  font-size: 48.2px;
  line-height: 68px;
  font-weight: 500;
  color: #000;
}

.slide-rule {
  height: 8px;
  margin-left: 1px;
  background: #808080;
}

/* eclipse window */
.window {
  width: 2012px;
  height: 1107px;
  margin: 163px 18px 0;
  display: flex;
  flex-direction: column;
  background: #e8e8e9;
  border-radius: 8px 8px 3px 3px;
  box-shadow: 0 20px 40px rgba(0, 0, 0, 0.55), 0 0 2px rgba(0, 0, 0, 0.4);
  filter: blur(0.35px);
}

.titlebar {
  height: 31px;
  flex: none;
  position: relative;
  display: flex;
  align-items: center;
  justify-content: center;
  padding-top: 4px;
  background: linear-gradient(#ebebeb, #d3d3d3);
  border-radius: 8px 8px 0 0;
  border-bottom: 1px solid #c4c4c4;
  box-sizing: border-box;
}

.lights {
  position: absolute;
  left: 10px;
  top: 7px;
  display: flex;
  gap: 11px;
}

.lights i {
  width: 18px;
  height: 18px;
  border-radius: 50%;
  background: #8c8c8c;
}

.title {
  display: flex;
  align-items: center;
  gap: 6px;
  font-size: 19.5px;
  color: #444;
}

.toolrow {
  height: 47px;
  flex: none;
  display: flex;
}

.tools {
  flex: none;
  width: 1810px;
  box-sizing: border-box;
  padding: 2px 0 0 6px;
  display: flex;
  align-items: center;
  background: linear-gradient(#d2d1d3, #a9a8aa);
  border-bottom: 2px solid #6f6f72;
}

.tool {
  width: 32px;
  height: 26px;
  flex: none;
  display: flex;
  align-items: center;
  padding-left: 5px;
  box-sizing: border-box;
}

.tool.has-arrow {
  width: 42.5px;
}

.tool.off .ico {
  opacity: 0.75;
}

.caret {
  display: block;
  width: 0;
  height: 0;
  margin-left: 5px;
  border-left: 3.5px solid transparent;
  border-right: 3.5px solid transparent;
  border-top: 7px solid #222;
}

.tool.off .caret {
  border-top-color: #888;
}

.sep {
  width: 8px;
  height: 32px;
  flex: none;
  background: repeating-linear-gradient(#8a8a8c 0 2px, transparent 2px 5px) center / 1px 100% no-repeat;
}

.sep.plain {
  background: linear-gradient(#bcbcbc, #bcbcbc) center / 1px 100% no-repeat;
}

.quick {
  width: 153px;
  height: 24px;
  margin-left: auto;
  line-height: 24px;
  text-align: center;
  background: #fff;
  border-radius: 2px;
  color: #bdbdbd;
  font-size: 16.5px;
}

.grip {
  width: 9px;
  height: 36px;
  flex: none;
  background: repeating-linear-gradient(#777 0 3px, transparent 3px 6px) center / 2px 100% no-repeat;
}

.perspectives {
  flex: 1;
  display: flex;
  align-items: center;
  padding-left: 21px;
  border-left: 2px solid #555;
  box-sizing: border-box;
  font-size: 15.8px;
  color: #333;
}

.persp {
  display: flex;
  align-items: center;
  gap: 3px;
  height: 31px;
  padding: 0 3px;
  box-sizing: border-box;
}

.persp.active {
  margin-left: 14px;
  margin-right: 3px;
  padding: 0 6px;
  background: #cfcfd1;
  border: 1px solid #bbb;
  width: 71px;
}

.workbench {
  flex: 1;
  min-height: 0;
  display: flex;
}

.trim {
  flex: none;
  display: flex;
  flex-direction: column;
  gap: 4px;
  padding-top: 7px;
  box-sizing: border-box;
}

.trim-left {
  width: 51px;
  padding-left: 1px;
}

.trim-right {
  width: 52px;
  padding-left: 8px;
}

.trim-card {
  width: 43px;
  display: flex;
  flex-direction: column;
  align-items: center;
  gap: 10px;
  padding: 5px 0 7px;
  background: #ececec;
  border: 1px solid #dcdcdc;
  border-top-color: #f6f6f6;
  border-radius: 3px 3px 9px 9px;
  box-sizing: border-box;
}

.dots {
  width: 22px;
  height: 2px;
  background: repeating-linear-gradient(90deg, #aaa 0 2px, transparent 2px 6px);
}

.junit {
  font-family: "Liberation Serif", serif;
  font-weight: 700;
  font-size: 20px;
  line-height: 22px;
  color: #3f8f62;
}

.junit em {
  font-style: normal;
  font-size: 16px;
  color: #d2506a;
}

.editor {
  width: 1909px;
  flex: none;
  padding-top: 6px;
  display: flex;
  flex-direction: column;
  box-sizing: border-box;
}

.tabbar {
  height: 42px;
  flex: none;
  display: flex;
  justify-content: space-between;
  background: linear-gradient(#f6f6f6, #dbdbdc);
  border-radius: 12px 12px 0 0;
  border-bottom: 1px solid #bcc8d8;
  box-sizing: border-box;
}

.file-tab {
  width: 175px;
  height: 47px;
  display: flex;
  align-items: center;
  padding: 0 0 2px 8px;
  gap: 6px;
  background: #fff;
  border-radius: 12px 12px 0 0;
  box-sizing: border-box;
  font-size: 16px;
  color: #111;
}

.file-tab .close {
  width: 18px;
  height: 18px;
  margin-left: 4px;
}

.view-btns {
  display: flex;
  gap: 8px;
  padding: 3px 16px 0 0;
}

.green-frame {
  height: 887px;
  margin: 5px 3px 0;
  flex: none;
  display: flex;
  position: relative;
  border: 4px solid #bfe8ae;
  background: #fff;
  box-sizing: border-box;
}

.structure {
  width: 422px;
  flex: none;
  display: flex;
  flex-direction: column;
  background: #fff;
  font-size: 16.5px;
}

.pane-head {
  height: 18px;
  flex: none;
  display: flex;
  background: #d4d4d4;
}

.back {
  display: block;
  width: 0;
  height: 0;
  margin: 3px 0 0 5px;
  border-top: 5.5px solid transparent;
  border-bottom: 5.5px solid transparent;
  border-right: 7px solid #1f3e78;
}

.pane-head .head-tab {
  margin-left: 6px;
  width: 193px;
}

.head-tab {
  display: flex;
  align-items: center;
  justify-content: center;
  gap: 12px;
  background: #fff;
  font-size: 15px;
  letter-spacing: 0.4px;
}

.head-tab u {
  display: block;
  width: 38px;
  height: 4px;
  border-top: 1px solid #aaa;
  border-bottom: 1px solid #aaa;
}

.comp-bar {
  height: 33px;
  flex: none;
  display: flex;
  align-items: center;
  gap: 7px;
  padding: 0 2px;
  background: #d0d0d0;
  border-bottom: 2px solid #bbb;
  box-sizing: border-box;
  color: #444;
}

.push {
  margin-left: auto;
}

.comp-bar .push {
  margin-right: 3px;
}

.tree {
  height: 394px;
  flex: none;
  background: #fff;
  padding-top: 1px;
  box-sizing: border-box;
  color: #111;
}

.node {
  height: 25px;
  display: flex;
  align-items: center;
  gap: 3px;
  padding-left: 28px;
}

.node.child {
  padding-left: 53px;
  gap: 3px;
}

.twist {
  margin-left: -15px;
  margin-right: 1px;
  width: 0;
  height: 0;
  border-left: 6px solid transparent;
  border-right: 6px solid transparent;
  border-top: 10px solid #777;
}

.hsash {
  height: 7px;
  flex: none;
  background: #dfdfdf;
}

.prop-bar {
  height: 34px;
  flex: none;
  display: flex;
  align-items: center;
  gap: 9px;
  padding: 0 6px 0 3px;
  background: linear-gradient(#ededed, #dcdcdc);
  color: #444;
}

.prop-bar span {
  margin-left: -3px;
}

.prop-bar .off {
  opacity: 0.75;
}

.prop-bar .push {
  margin-right: 8px;
}

.props {
  flex: 1;
  text-align: center;
  padding-top: 188px;
  padding-right: 20px;
  font-size: 16.3px;
  letter-spacing: 0.25px;
  color: #888;
  background: linear-gradient(90deg, #fff 402px, #f7f7f7 402px);
  border-right: 1px solid #ccc;
  box-sizing: border-box;
}

.designer {
  flex: 1;
  min-width: 0;
  display: flex;
  flex-direction: column;
  border-left: 7px solid #e6e6e6;
  box-sizing: border-box;
}

.design-tools {
  height: 31px;
  flex: none;
  display: flex;
  align-items: center;
  background: #d4d4d5;
  font-size: 16px;
  color: #333;
  margin-left: -7px;
  padding-left: 9px;
}

.design-tools .tool {
  height: 24px;
}

.design-tools .ml2 {
  margin-left: 2px;
}

.design-tools .ml8 {
  margin-left: 8px;
}

.sys {
  margin-left: 4px;
}

.laf {
  margin: 0 10px 0 6px;
}

.design-body {
  flex: 1;
  min-height: 0;
  display: flex;
}

.palette {
  width: 297px;
  flex: none;
  display: flex;
  flex-direction: column;
  background: #e6e6e7;
  border-left: 3px solid #b8b8b8;
  box-sizing: border-box;
  overflow: hidden;
  font-size: 16.5px;
  color: #444;
}

.palette-head {
  height: 19px;
  flex: none;
  display: flex;
  background: #d4d4d5;
}

.palette-head .head-tab {
  margin-left: 6px;
  width: 172px;
}

.palette-head .back {
  margin: 4px 0 0 4px;
}

.palette-list {
  position: relative;
  flex: 1;
  min-height: 0;
  overflow: hidden;
}

.scroll {
  position: absolute;
  left: 279px;
  top: 5px;
  width: 11px;
  height: 716px;
  border-radius: 6px;
  background: #b9b9ba;
}

.cat {
  width: 274px;
  height: 23px;
  display: flex;
  align-items: center;
  gap: 8px;
  padding: 3px 0 0 4px;
  margin-top: 1px;
  box-sizing: border-box;
  background: linear-gradient(#f4f4f4, #e2e2e2);
  border-bottom: 2px solid #b0b0b0;
  border-right: 2px solid #b8b8b8;
  font-size: 15.8px;
  font-weight: 700;
  letter-spacing: 0.35px;
  color: #222;
}

.items {
  width: 274px;
  display: grid;
  grid-template-columns: 137px 137px;
  grid-auto-rows: 31.7px;
  padding-bottom: 1px;
}

.item {
  display: flex;
  align-items: center;
  gap: 5px;
  padding: 1px 0 0 4px;
  white-space: nowrap;
  box-sizing: border-box;
}

.item:nth-child(2n) {
  padding-left: 5px;
  gap: 5px;
}

.item.selected {
  background: #fff;
  margin: 1px 3px 0 0;
  padding-top: 3px;
  gap: 6px;
}

.vsash {
  width: 8px;
  flex: none;
  background: #e8e8e8;
  border-left: 1px solid #ccc;
  border-right: 1px solid #ccc;
  box-sizing: border-box;
}

.canvas {
  flex: 1;
  min-width: 0;
  display: flex;
  flex-direction: column;
  background: #fff;
}

.ruler-top {
  height: 23px;
  flex: none;
  background: #fff;
  border-bottom: 2px solid #bcbcbc;
  box-sizing: border-box;
}

.canvas-row {
  flex: 1;
  min-height: 0;
  display: flex;
}

.ruler-left {
  width: 24px;
  flex: none;
  background: #f4f4f5;
  border-right: 1px solid #bbb;
  box-sizing: border-box;
}

.stage {
  position: relative;
  flex: 1;
  min-width: 0;
  padding: 41px 0 0 28px;
}

.mock {
  width: 648px;
  height: 431px;
  background: #efeef0;
  border: 1px solid #c6c6c8;
  box-sizing: border-box;
}

.mock-title {
  height: 32px;
  display: flex;
  align-items: center;
  gap: 10px;
  padding-left: 13px;
  background: linear-gradient(#cfced0, #a8a7a9);
  border-bottom: 2px solid #77767a;
  box-sizing: border-box;
}

.mock-title i {
  width: 20px;
  height: 20px;
  border-radius: 50%;
}

.mock-title i:nth-child(1) {
  background: radial-gradient(circle at 50% 70%, #ff8a80, #d8262a);
}

.mock-title i:nth-child(2) {
  background: radial-gradient(circle at 50% 70%, #ffd080, #e07f14);
}

.mock-title i:nth-child(3) {
  background: radial-gradient(circle at 50% 70%, #bdf08a, #4aa02a);
}

.version {
  position: absolute;
  right: 3px;
  bottom: -2px;
  font-size: 16.5px;
  letter-spacing: 0.85px;
  color: #dcdcdc;
}

.bottom-tabs {
  height: 45px;
  flex: none;
  margin-left: 1px;
  display: flex;
  align-items: flex-start;
  background: #d4d5d3;
  border-radius: 0 0 8px 8px;
  border-bottom: 2px solid #fff;
  box-shadow: 0 2px 0 #c8c8c8;
  font-size: 16.3px;
  color: #111;
}

.btab {
  height: 42px;
  display: flex;
  align-items: center;
  gap: 8px;
  padding: 3px 0 0 9px;
  box-sizing: border-box;
}

.btab:first-child {
  width: 97px;
}

.btab.active {
  width: 92px;
  gap: 6px;
  background: linear-gradient(#bde6a4, #d8f0ca);
  border-radius: 0 0 5px 5px;
  border-bottom: 2px solid #9aa892;
  padding-left: 6px;
}

.status {
  height: 44px;
  flex: none;
  display: flex;
  align-items: center;
  padding: 2px 0 0 1173px;
  box-sizing: border-box;
  font-size: 16.8px;
  color: #222;
}

.seg {
  height: 32px;
  line-height: 32px;
  padding-left: 11px;
  border-left: 1px solid #bdbdbd;
  box-sizing: border-box;
}

.w1 {
  width: 150px;
}

.w2 {
  width: 141px;
}

.w3 {
  width: 140px;
}

.status-grip {
  width: 2px;
  height: 24px;
  background: repeating-linear-gradient(#999 0 3px, transparent 3px 6px);
}

/* overlays */
.red-box {
  position: absolute;
  left: 158px;
  top: 1302px;
  width: 110px;
  height: 63px;
  border: 6px solid #f00;
  border-radius: 2px;
  box-sizing: border-box;
}

.mouse {
  position: absolute;
  left: 272px;
  top: 1323px;
}
</style>
